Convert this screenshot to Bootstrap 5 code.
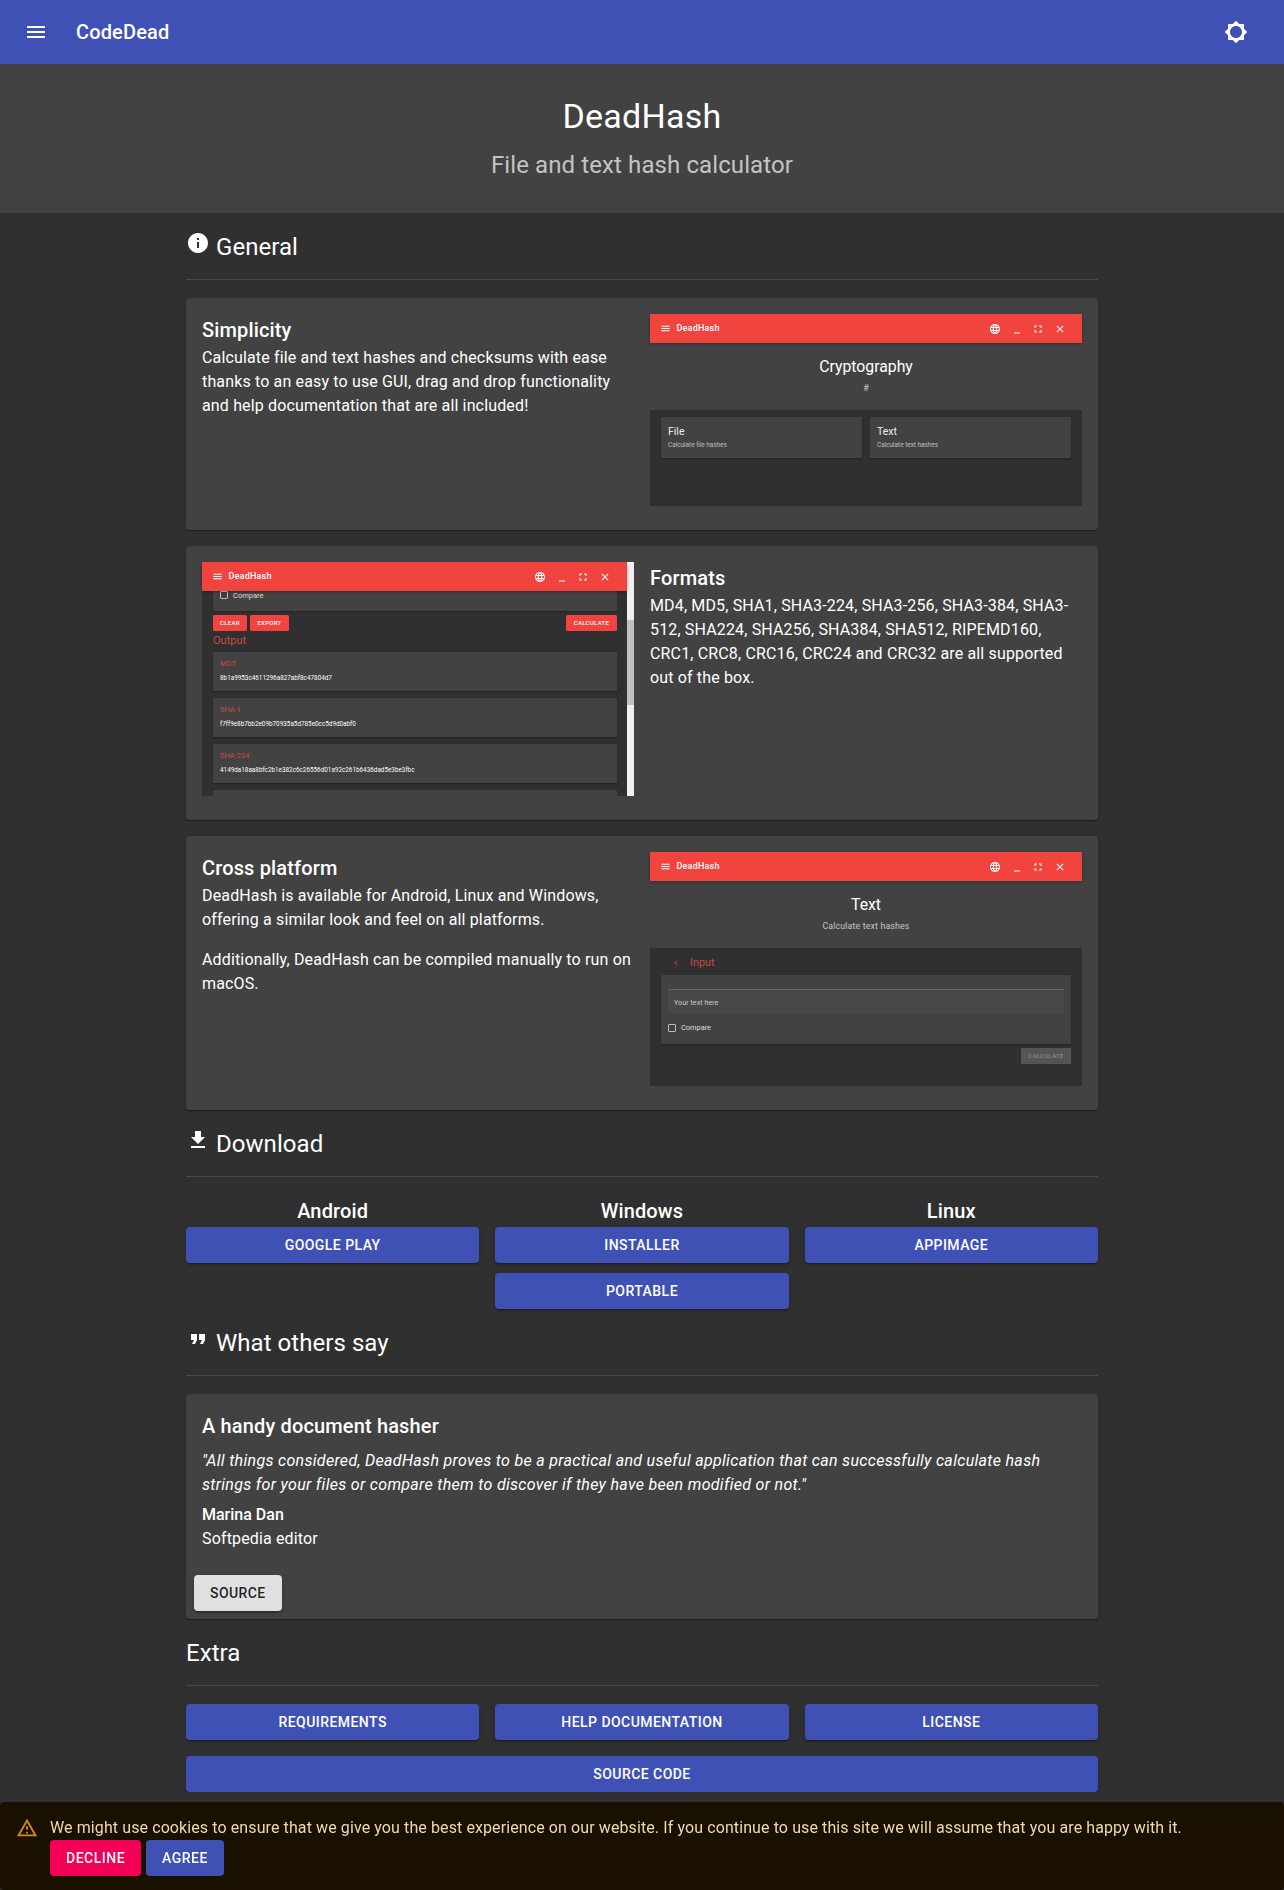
<!DOCTYPE html>
<html lang="en">
  <head>
    <meta charset="UTF-8" />
    <meta name="viewport" content="width=device-width, initial-scale=1.0" />
    <title>DeadHash</title>
    <link href="https://cdn.jsdelivr.net/npm/bootstrap@5.3.0/dist/css/bootstrap.min.css" rel="stylesheet" />
    <style>
      body { background: #303030; color: #fff; font-family: Roboto, "Liberation Sans", sans-serif; font-size: 16px; line-height: 24px; letter-spacing: .15px; }
      .top-bar { background: #3f51b5; height: 64px; padding: 0 36px 0 24px; box-shadow: 0 2px 4px rgba(0,0,0,.3); }
      .top-bar svg { fill: #fff; }
      .brand-name { font-size: 20px; font-weight: 500; line-height: 32px; margin-left: 28px; letter-spacing: .15px; }
      .hero-band { background: #424242; height: 149px; padding-top: 28px; text-align: center; }
      .hero-band h1 { font-size: 34px; font-weight: 400; line-height: 48px; margin: 0 0 7px; letter-spacing: .25px; }
      .hero-band p { font-size: 24px; line-height: 36px; margin: 0; color: rgba(255,255,255,.7); letter-spacing: .1px; }
      .page-body { width: 912px; margin: 0 auto; }
      .sect-head { height: 48px; display: flex; align-items: flex-start; font-size: 24px; line-height: 32px; font-weight: 400; margin: 0; padding-top: 18px; box-sizing: content-box; letter-spacing: .05px; }
      .sect-head svg { fill: #fff; width: 24px; height: 24px; margin: 0 6px 0 0; flex: none; }
      .sect-rule { border-top: 1px solid rgba(255,255,255,.12); margin: 0 0 18px; opacity: 1; }
      .panel { background: #424242; border-radius: 4px; padding: 16px; margin-bottom: 16px; box-shadow: 0 2px 1px -1px rgba(0,0,0,.2), 0 1px 1px rgba(0,0,0,.14), 0 1px 3px rgba(0,0,0,.12); }
      .panel:last-of-type { margin-bottom: 0; }
      .panel h2 { font-size: 20px; font-weight: 500; line-height: 32px; margin: 0; letter-spacing: .15px; }
      .panel p { margin: 0; }
      .panel-h1 { height: 232px; }
      .panel-h2 { height: 274px; }
      .text-side { width: 432px; flex: none; }
      .shot { width: 432px; flex: none; background: #424242; }
      .shot svg { fill: #fff; display: block; }
      .shot-bar { background: #f1443f; height: 29px; padding: 0 16px 0 10px; font-size: 9px; font-weight: 500; line-height: 29px; letter-spacing: .2px; box-shadow: 0 1px 3px rgba(0,0,0,.3); position: relative; }
      .shot-bar .ctl { width: 12px; height: 12px; margin-left: 9.7px; }
      .shot-bar .ham { width: 11px; height: 11px; margin-right: 5.5px; }
      .shot-head { text-align: center; }
      .shot-title { font-size: 15.8px; line-height: 20px; letter-spacing: 0; }
      .shot-sub { color: rgba(255,255,255,.7); line-height: 12px; }
      .shot-dark { background: #303030; }
      .mini-paper { background: #424242; border-radius: 1px; box-shadow: 0 1px 2px rgba(0,0,0,.3); }
      .mini-tile { flex: 1; height: 41px; padding: 8px 7px; }
      .mini-tile b { display: block; font-weight: 400; font-size: 10.5px; line-height: 14px; letter-spacing: 0; color: #eee; }
      .mini-tile span { display: block; font-size: 6.4px; line-height: 13px; letter-spacing: 0; color: rgba(255,255,255,.65); }
      .mini-btn { background: #f1443f; border-radius: 1.5px; height: 16px; font-size: 6px; font-weight: 500; line-height: 16px; text-align: center; letter-spacing: .3px; }
      .mini-hash { height: 39px; margin-bottom: 7px; padding: 6px 7px; line-height: 12px; letter-spacing: 0; }
      .mini-hash b { display: block; font-weight: 400; font-size: 7.5px; color: #c84a42; margin-bottom: 2px; }
      .mini-hash span { display: block; font-size: 6.35px; }
      .mini-check { width: 8px; height: 8px; border: 1px solid #bbb; border-radius: 1px; flex: none; }
      .shot-scroll { width: 7px; background: #f1f1f1; flex: none; }
      .shot-thumb { background: #c1c1c1; height: 85px; margin-top: 58px; }
      .blue-btn, .blue-btn:hover { background: #3f51b5; color: #fff; border: 0; border-radius: 4px; height: 36px; width: 100%; font-size: 14px; font-weight: 500; letter-spacing: .45px; line-height: 36px; padding: 0; text-transform: uppercase; box-shadow: 0 3px 1px -2px rgba(0,0,0,.2), 0 2px 2px rgba(0,0,0,.14), 0 1px 5px rgba(0,0,0,.12); }
      .os-name { font-size: 20px; font-weight: 500; line-height: 24px; text-align: center; letter-spacing: .15px; margin: 0 0 4px; }
      .grey-btn, .grey-btn:hover { background: #e0e0e0; color: rgba(0,0,0,.87); border: 0; border-radius: 4px; height: 36px; padding: 0 16px; font-size: 14px; font-weight: 500; letter-spacing: .4px; text-transform: uppercase; box-shadow: 0 3px 1px -2px rgba(0,0,0,.2), 0 2px 2px rgba(0,0,0,.14), 0 1px 5px rgba(0,0,0,.12); }
      .quote-line { font-style: italic; margin-top: 7px !important; letter-spacing: .31px; }
      .quote-who { font-weight: 500; margin-top: 6px !important; letter-spacing: 0; }
      .cookie-bar { position: fixed; left: 0; right: 0; bottom: 0; height: 88px; background: #191000; border-radius: 4px; padding: 14px 16px 0; color: #f0d8b0; letter-spacing: .1px; }
      .cookie-bar svg { width: 22px; height: 22px; fill: #d8891c; flex: none; margin: 1px 12px 0 0; }
      .cookie-btn { border: 0; color: #fff; height: 36px; border-radius: 4px; padding: 0 16px; font-size: 14px; font-weight: 500; letter-spacing: .5px; text-transform: uppercase; margin-right: 5px; }
      .cookie-no { background: #f50057; }
      .cookie-yes { background: #3f51b5; }
    </style>
  </head>
  <body>
    <svg width="0" height="0" class="position-absolute">
      <symbol id="i-menu" viewBox="0 0 24 24"><path d="M3 18h18v-2H3v2zm0-5h18v-2H3v2zm0-7v2h18V6H3z"/></symbol>
      <symbol id="i-globe" viewBox="0 0 24 24"><path d="M11.99 2C6.47 2 2 6.48 2 12s4.47 10 9.99 10C17.52 22 22 17.52 22 12S17.52 2 11.99 2zm6.93 6h-2.95c-.32-1.25-.78-2.45-1.38-3.56 1.84.63 3.37 1.91 4.33 3.56zM12 4.04c.83 1.2 1.48 2.53 1.91 3.96h-3.82c.43-1.43 1.08-2.76 1.91-3.96zM4.26 14C4.1 13.36 4 12.69 4 12s.1-1.36.26-2h3.38c-.08.66-.14 1.32-.14 2 0 .68.06 1.34.14 2H4.26zm.82 2h2.95c.32 1.25.78 2.45 1.38 3.56-1.84-.63-3.37-1.9-4.33-3.56zm2.95-8H5.08c.96-1.66 2.49-2.93 4.33-3.56C8.81 5.55 8.35 6.75 8.03 8zM12 19.96c-.83-1.2-1.48-2.53-1.91-3.96h3.82c-.43 1.43-1.08 2.76-1.91 3.96zM14.34 14H9.66c-.09-.66-.16-1.32-.16-2 0-.68.07-1.35.16-2h4.68c.09.65.16 1.32.16 2 0 .68-.07 1.34-.16 2zm.25 5.56c.6-1.11 1.06-2.31 1.38-3.56h2.95c-.96 1.65-2.49 2.93-4.33 3.56zM16.36 14c.08-.66.14-1.32.14-2 0-.68-.06-1.34-.14-2h3.38c.16.64.26 1.31.26 2s-.1 1.36-.26 2h-3.38z"/></symbol>
      <symbol id="i-min" viewBox="0 0 24 24"><path d="M6 19h12v2H6z"/></symbol>
      <symbol id="i-full" viewBox="0 0 24 24"><path d="M7 14H5v5h5v-2H7v-3zm-2-4h2V7h3V5H5v5zm12 7h-3v2h5v-5h-2v3zM14 5v2h3v3h2V5h-5z"/></symbol>
      <symbol id="i-close" viewBox="0 0 24 24"><path d="M19 6.41L17.59 5 12 10.59 6.41 5 5 6.41 10.59 12 5 17.59 6.41 19 12 13.41 17.59 19 19 17.59 13.41 12z"/></symbol>
    </svg>

    <nav class="top-bar d-flex align-items-center justify-content-between">
      <div class="d-flex align-items-center">
        <svg width="24" height="24"><use href="#i-menu"/></svg>
        <span class="brand-name">CodeDead</span>
      </div>
      <svg width="24" height="24" viewBox="0 0 24 24"><path d="M20 15.31L23.31 12 20 8.69V4h-4.69L12 .69 8.69 4H4v4.69L.69 12 4 15.31V20h4.69L12 23.31 15.31 20H20v-4.69zM12 18c-3.31 0-6-2.69-6-6s2.69-6 6-6 6 2.69 6 6-2.69 6-6 6z"/></svg>
    </nav>

    <header class="hero-band">
      <h1>DeadHash</h1>
      <p>File and text hash calculator</p>
    </header>

    <main class="page-body">
      <h3 class="sect-head">
        <svg viewBox="0 0 24 24"><path d="M12 2C6.48 2 2 6.48 2 12s4.48 10 10 10 10-4.48 10-10S17.52 2 12 2zm1 15h-2v-6h2v6zm0-8h-2V7h2v2z"/></svg>
        General
      </h3>
      <hr class="sect-rule" />

      <div>
      <section class="panel panel-h1 d-flex justify-content-between">
        <div class="text-side">
          <h2>Simplicity</h2>
          <p>Calculate file and text hashes and checksums with ease thanks to an easy to use GUI, drag and drop functionality and help documentation that are all included!</p>
        </div>
        <div class="shot">
          <div class="shot-bar d-flex align-items-center">
            <svg class="ham"><use href="#i-menu"/></svg><span class="flex-grow-1">DeadHash</span>
            <svg class="ctl"><use href="#i-globe"/></svg><svg class="ctl"><use href="#i-min"/></svg><svg class="ctl"><use href="#i-full"/></svg><svg class="ctl"><use href="#i-close"/></svg>
          </div>
          <div class="shot-head" style="height: 67px; padding-top: 14px">
            <div class="shot-title">Cryptography</div>
            <div class="shot-sub" style="font-size: 9px; margin-top: 5px">#</div>
          </div>
          <div class="shot-dark d-flex gap-2" style="height: 96px; padding: 7px 11px 0">
            <div class="mini-paper mini-tile"><b>File</b><span>Calculate file hashes</span></div>
            <div class="mini-paper mini-tile"><b>Text</b><span>Calculate text hashes</span></div>
          </div>
        </div>
      </section>

      <section class="panel panel-h2 d-flex justify-content-between">
        <div class="shot d-flex" style="height: 234px; background: transparent">
          <div class="flex-grow-1 d-flex flex-column">
            <div class="shot-bar d-flex align-items-center">
              <svg class="ham"><use href="#i-menu"/></svg><span class="flex-grow-1">DeadHash</span>
              <svg class="ctl"><use href="#i-globe"/></svg><svg class="ctl"><use href="#i-min"/></svg><svg class="ctl"><use href="#i-full"/></svg><svg class="ctl"><use href="#i-close"/></svg>
            </div>
            <div class="shot-dark flex-grow-1 overflow-hidden" style="padding: 0 10px 0 11px">
              <div class="mini-paper d-flex align-items-center" style="height: 20px; gap: 5px; padding: 0 7px 11px; font-size: 7.5px; letter-spacing: 0; line-height: 9px; color: #ddd"><i class="mini-check" style="margin-top: -2px"></i>Compare</div>
              <div class="d-flex" style="margin-top: 4px; gap: 3px">
                <div class="mini-btn" style="width: 34px">CLEAR</div>
                <div class="mini-btn" style="width: 39px">EXPORT</div>
                <div class="mini-btn ms-auto" style="width: 51px">CALCULATE</div>
              </div>
              <div style="color: #c84a42; font-size: 11px; line-height: 14px; margin: 3px 0 4px; letter-spacing: 0">Output</div>
              <div class="mini-paper mini-hash"><b>MD5</b><span>8b1a9953c4611296a827abf8c47804d7</span></div>
              <div class="mini-paper mini-hash"><b>SHA-1</b><span>f7ff9e8b7bb2e09b70935a5d785e0cc5d9d0abf0</span></div>
              <div class="mini-paper mini-hash"><b>SHA-224</b><span>4149da18aa8bfc2b1e382c6c26556d01a92c261b6436dad5e3be3fbc</span></div>
              <div class="mini-paper mini-hash"></div>
            </div>
          </div>
          <div class="shot-scroll"><div class="shot-thumb"></div></div>
        </div>
        <div class="text-side">
          <h2>Formats</h2>
          <p>MD4, MD5, SHA1, SHA3-224, SHA3-256, SHA3-384, SHA3-512, SHA224, SHA256, SHA384, SHA512, RIPEMD160, CRC1, CRC8, CRC16, CRC24 and CRC32 are all supported out of the box.</p>
        </div>
      </section>

      <section class="panel panel-h2 d-flex justify-content-between">
        <div class="text-side">
          <h2>Cross platform</h2>
          <p class="mb-3">DeadHash is available for Android, Linux and Windows, offering a similar look and feel on all platforms.</p>
          <p>Additionally, DeadHash can be compiled manually to run on macOS.</p>
        </div>
        <div class="shot" style="height: 234px">
          <div class="shot-bar d-flex align-items-center">
            <svg class="ham"><use href="#i-menu"/></svg><span class="flex-grow-1">DeadHash</span>
            <svg class="ctl"><use href="#i-globe"/></svg><svg class="ctl"><use href="#i-min"/></svg><svg class="ctl"><use href="#i-full"/></svg><svg class="ctl"><use href="#i-close"/></svg>
          </div>
          <div class="shot-head" style="height: 67px; padding-top: 14px">
            <div class="shot-title">Text</div>
            <div class="shot-sub" style="font-size: 8.8px; margin-top: 5px">Calculate text hashes</div>
          </div>
          <div class="shot-dark" style="height: 138px; padding: 5px 11px 0">
            <div class="d-flex align-items-center" style="color: #c84a42; font-size: 10.8px; line-height: 19px; margin-bottom: 3px; padding-left: 10px; letter-spacing: 0">
              <svg width="10" height="10" viewBox="0 0 24 24" style="fill: #c84a42; margin-right: 9px"><path d="M15.41 7.41L14 6l-6 6 6 6 1.41-1.41L10.83 12z"/></svg>Input
            </div>
            <div class="mini-paper" style="height: 69px; padding: 14px 7px 0">
              <div style="border-top: 1px solid #666; font-size: 7px; line-height: 10px; padding: 8px 6px; color: #ccc; letter-spacing: .1px; background: #484848; height: 25px">Your text here</div>
              <div class="d-flex align-items-center" style="font-size: 7.4px; letter-spacing: 0; line-height: 10px; margin-top: 9px; gap: 5px; color: #ddd"><i class="mini-check"></i>Compare</div>
            </div>
            <div class="mini-btn ms-auto" style="width: 50px; margin-top: 4px; background: #555; color: #8a8a8a; border-radius: 0">CALCULATE</div>
          </div>
        </div>
      </section>
      </div>

      <h3 class="sect-head">
        <svg viewBox="0 0 24 24"><path d="M19 9h-4V3H9v6H5l7 7 7-7zM5 18v2h14v-2H5z"/></svg>
        Download
      </h3>
      <hr class="sect-rule" />
      <div class="row gx-3" style="margin-top: 22px">
        <div class="col-4">
          <h4 class="os-name">Android</h4>
          <button class="btn blue-btn">Google Play</button>
        </div>
        <div class="col-4">
          <h4 class="os-name">Windows</h4>
          <button class="btn blue-btn" style="margin-bottom: 10px">Installer</button>
          <button class="btn blue-btn">Portable</button>
        </div>
        <div class="col-4">
          <h4 class="os-name">Linux</h4>
          <button class="btn blue-btn">AppImage</button>
        </div>
      </div>

      <h3 class="sect-head">
        <svg viewBox="0 0 24 24"><path d="M6 17h3l2-4V7H5v6h3zm8 0h3l2-4V7h-6v6h3z"/></svg>
        What others say
      </h3>
      <hr class="sect-rule" />
      <div>
      <section class="panel" style="height: 225px; padding-bottom: 8px">
        <h2>A handy document hasher</h2>
        <p class="quote-line">"All things considered, DeadHash proves to be a practical and useful application that can successfully calculate hash strings for your files or compare them to discover if they have been modified or not."</p>
        <p class="quote-who">Marina Dan</p>
        <p>Softpedia editor</p>
        <button class="btn grey-btn" style="margin: 24px 0 0 -8px">Source</button>
      </section>
      </div>

      <h3 class="sect-head">Extra</h3>
      <hr class="sect-rule" />
      <div class="row gx-3 mb-3">
        <div class="col-4"><button class="btn blue-btn">Requirements</button></div>
        <div class="col-4"><button class="btn blue-btn">Help documentation</button></div>
        <div class="col-4"><button class="btn blue-btn">License</button></div>
      </div>
      <button class="btn blue-btn">Source code</button>
    </main>

    <div class="cookie-bar d-flex">
      <svg viewBox="0 0 24 24"><path d="M12 5.99L19.53 19H4.47L12 5.99M12 2L1 21h22L12 2zm1 14h-2v2h2v-2zm0-6h-2v4h2v-4z"/></svg>
      <div>
        <div>We might use cookies to ensure that we give you the best experience on our website. If you continue to use this site we will assume that you are happy with it.</div>
        <button class="cookie-btn cookie-no">Decline</button><button class="cookie-btn cookie-yes">Agree</button>
      </div>
    </div>

    <script src="https://cdn.jsdelivr.net/npm/bootstrap@5.3.0/dist/js/bootstrap.bundle.min.js"></script>
  </body>
</html>
